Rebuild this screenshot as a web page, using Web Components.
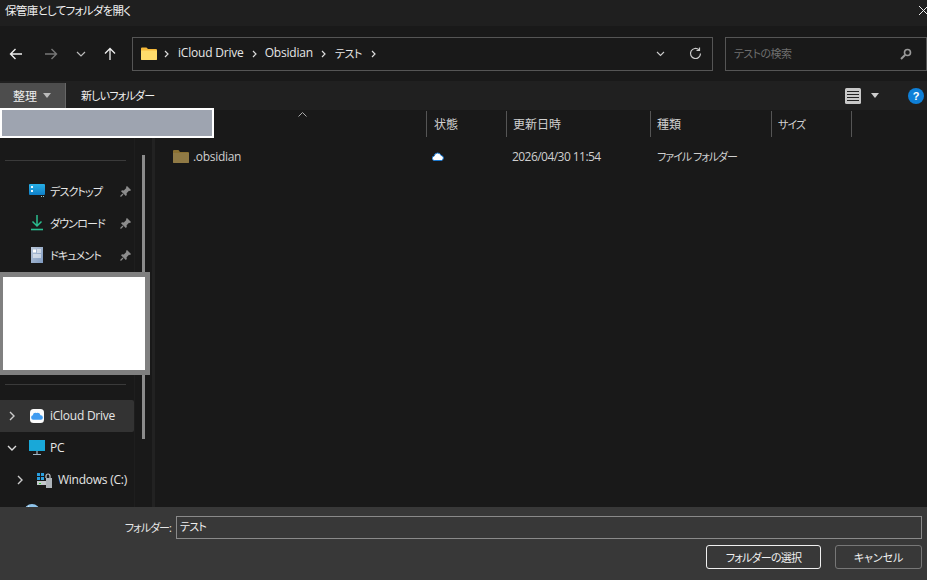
<!DOCTYPE html>
<html>
<head>
<meta charset="utf-8">
<style>
html, body { margin: 0; padding: 0; background: #191919; }
body { font: 12px "Open Sans", "Noto Sans CJK JP", sans-serif; font-feature-settings: "palt"; color: #e6e6e6; }
</style>
</head>
<body>
<folder-dialog>
    <title-bar>保管庫としてフォルダを開く</title-bar>
    <nav-bar></nav-bar>
    <tool-bar></tool-bar>
    <main-pane>
        <side-bar>
            <side-item icon="desktop" pin>デスクトップ</side-item>
            <side-item icon="download" pin>ダウンロード</side-item>
            <side-item icon="document" pin>ドキュメント</side-item>
            <side-rule></side-rule>
            <side-item icon="icloud" arrow="right" active>iCloud Drive</side-item>
            <side-item icon="pc" arrow="down">PC</side-item>
            <side-item icon="drive" arrow="right" level="1">Windows (C:)</side-item>
            <side-item icon="globe"></side-item>
        </side-bar>
        <file-list></file-list>
    </main-pane>
    <foot-bar></foot-bar>
</folder-dialog>

<script>
const icons = {
    desktop: `<svg width="17" height="14" viewBox="0 0 17 14"><defs><linearGradient id="d" x1="0" y1="0" x2="0" y2="1"><stop offset="0" stop-color="#27b0e6"/><stop offset="1" stop-color="#0f7ec8"/></linearGradient></defs><rect x="0" y="0" width="16" height="11" rx="1" fill="url(#d)"/><rect x="2" y="2" width="2" height="2" fill="#e8f6fc"/><rect x="2" y="6" width="2" height="2" fill="#e8f6fc"/><rect x="12" y="12" width="1" height="1" fill="#9cc"/><rect x="14" y="12" width="1" height="1" fill="#9cc"/></svg>`,
    download: `<svg width="14" height="16" viewBox="0 0 14 16"><path d="M7 0v11M2.5 6.5 7 11l4.5-4.5" fill="none" stroke="#2bbd8f" stroke-width="1.5"/><path d="M1 14.5h12" stroke="#2bbd8f" stroke-width="1.6"/></svg>`,
    document: `<svg width="12" height="16" viewBox="0 0 12 16"><defs><linearGradient id="p" x1="0" y1="0" x2="1" y2="1"><stop offset="0" stop-color="#b9c6d8"/><stop offset="1" stop-color="#7f9ac0"/></linearGradient></defs><rect width="12" height="16" fill="url(#p)"/><rect x="2" y="2.5" width="3" height="3" fill="#fff"/><path d="M6 3h4M6 5h4M2 8h8M2 10h8" stroke="#fff"/></svg>`,
    icloud: `<svg width="14" height="14" viewBox="0 0 14 14"><rect width="14" height="14" rx="3.5" fill="#fbfbfb"/><path d="M3.2 10.8a2.3 2.3 0 0 1-.4-4.5A2.9 2.9 0 0 1 6.4 4a3.3 3.3 0 0 1 4.1 2.2 2.3 2.3 0 0 1 .2 4.6z" fill="#3f9bf0"/></svg>`,
    pc: `<svg width="16" height="16" viewBox="0 0 16 16"><rect x="0" y="0" width="16" height="11" fill="#19a8d8"/><path d="M8 11v3M4 14.5h8" stroke="#9fb4c4" stroke-width="1.2"/></svg>`,
    drive: `<svg width="16" height="15" viewBox="0 0 16 15"><path d="M0 0h3v3H0zM4 0h3v3H4zM0 4h3v3H0zM4 4h3v3H4z" fill="#2a9fe0"/><rect x="0" y="8" width="15" height="4" fill="#c4c8cc"/><path d="M9 5V3a2 2 0 0 1 4 0V5" fill="none" stroke="#c4c8cc" stroke-width="1.2"/><rect x="9" y="5" width="6" height="10" fill="#aeb4ba"/><rect x="2" y="10" width="2" height="1" fill="#3c3"/></svg>`,
    globe: `<svg width="16" height="16" viewBox="0 0 16 16" style="transform:translateX(-5px)"><circle cx="8" cy="8" r="8" fill="#8fc4ea"/><path d="M4 2c2 1 3 3 2 5" fill="none" stroke="#e0eef8"/></svg>`
}

const sep = `<svg class="sep" width="5" height="8" viewBox="0 0 5 8"><path d="M1 1l3 3-3 3" fill="none" stroke="#ddd" stroke-width="1.2"/></svg>`

class FolderDialog extends HTMLElement {
    constructor() {
        super()
        this.attachShadow({ mode: 'open' }).innerHTML = `
            <style>
                :host { display: flex; flex-direction: column; width: 927px; height: 580px; overflow: hidden; position: relative; }
                .redact-top { position: absolute; left: 0; top: 108px; width: 210px; height: 26px; background: #9ea4b0; border: 2px solid #fff; }
                .redact-mid { position: absolute; left: 0; top: 272px; width: 142px; height: 93px; background: #fff; border: 5px solid #808080; border-left-width: 3px; }
            </style>
            <slot></slot>
            <div class="redact-top"></div>
            <div class="redact-mid"></div>`
    }
}

class TitleBar extends HTMLElement {
    constructor() {
        super()
        this.attachShadow({ mode: 'open' }).innerHTML = `
            <style>
                :host { display: flex; align-items: center; justify-content: space-between; box-sizing: border-box; height: 26px; padding: 0 0 6px 5px; background: #1f1f1f; color: #f0f0f0; flex: none; font-size: 11.5px; letter-spacing: -0.68px; }
                svg { margin-right: -2px; display: block; }
            </style>
            <span><slot></slot></span>
            <svg width="11" height="11" viewBox="0 0 11 11"><path d="M1 1l9 9M10 1l-9 9" stroke="#eee" stroke-width="1"/></svg>`
    }
}

class NavBar extends HTMLElement {
    constructor() {
        super()
        this.attachShadow({ mode: 'open' }).innerHTML = `
            <style>
                :host { display: flex; align-items: center; height: 55px; background: #191919; flex: none; }
                .btn { display: flex; justify-content: center; width: 14px; flex: none; }
                .addr { display: flex; align-items: center; box-sizing: border-box; width: 581px; height: 34px; margin-left: 15px; border: 1px solid #555; padding: 0 10px 2px 8px; }
                .crumb { color: #e6e6e6; margin-right: 8px; letter-spacing: -0.2px; }
                .kana { font-size: 11px; letter-spacing: -0.4px; margin: 0 9px 0 1px; }
                .sep { margin: 2px 8px 0 0; display: block; }
                .grow { flex: 1; }
                .search { display: flex; align-items: center; justify-content: space-between; box-sizing: border-box; width: 202px; height: 34px; margin-left: 12px; border: 1px solid #555; padding: 0 14px 2px 8px; color: #6e6e6e; font-size: 11px; letter-spacing: -0.6px; }
            </style>
            <div class="btn" style="margin-left:9px"><svg width="14" height="14" viewBox="0 0 14 14"><path d="M13 7H1.5M6.5 2 1.5 7l5 5" fill="none" stroke="#eee" stroke-width="1.4"/></svg></div>
            <div class="btn" style="margin-left:21px"><svg width="14" height="14" viewBox="0 0 14 14"><path d="M1 7h11.5M7.5 2l5 5-5 5" fill="none" stroke="#777" stroke-width="1.4"/></svg></div>
            <div class="btn" style="margin-left:16px"><svg width="10" height="6" viewBox="0 0 10 6"><path d="M1 1l4 4 4-4" fill="none" stroke="#bbb" stroke-width="1.2"/></svg></div>
            <div class="btn" style="margin-left:15px"><svg width="14" height="14" viewBox="0 0 14 14"><path d="M7 13V1.5M2 6.5l5-5 5 5" fill="none" stroke="#eee" stroke-width="1.3"/></svg></div>
            <div class="addr">
                <svg width="16" height="13" viewBox="0 0 16 13" style="margin:2px 7px 0 0"><path d="M0 1.5A1 1 0 0 1 1 .5h4.5L7 2h8a1 1 0 0 1 1 1v9a1 1 0 0 1-1 1H1a1 1 0 0 1-1-1z" fill="#f5b93a"/><path d="M0 3.5h16V12a1 1 0 0 1-1 1H1a1 1 0 0 1-1-1z" fill="#ffdc6b"/></svg>
                ${sep}
                <span class="crumb" style="margin-left:1px">iCloud Drive</span>
                ${sep}
                <span class="crumb">Obsidian</span>
                ${sep}
                <span class="crumb kana">テスト</span>
                ${sep}
                <span class="grow"></span>
                <svg width="9" height="6" viewBox="0 0 9 6" style="margin:2px 24px 0 0"><path d="M1 1l3.5 3.5L8 1" fill="none" stroke="#ccc" stroke-width="1.1"/></svg>
                <svg width="13" height="13" viewBox="0 0 13 13" style="margin-top:2px"><path d="M11.5 6.5a5 5 0 1 1-1.6-3.7" fill="none" stroke="#ccc" stroke-width="1.2"/><path d="M10.5.5v3h-3" fill="none" stroke="#ccc" stroke-width="1.2"/></svg>
            </div>
            <div class="search">
                <span>テストの検索</span>
                <svg width="12" height="12" viewBox="0 0 12 12" style="margin-top:2px"><circle cx="7.5" cy="4.5" r="3" fill="none" stroke="#9a9a9a" stroke-width="1.6"/><path d="M5 7l-4 4" stroke="#9a9a9a" stroke-width="2"/></svg>
            </div>`
    }
}

class ToolBar extends HTMLElement {
    constructor() {
        super()
        this.attachShadow({ mode: 'open' }).innerHTML = `
            <style>
                :host { display: flex; align-items: center; height: 29px; background: #202020; flex: none; }
                .org { display: flex; align-items: center; box-sizing: border-box; width: 66px; height: 27px; align-self: flex-start; margin-top: 2px; background: #4d4d4d; border-right: 1px solid #666; padding: 0 0 2px 13px; gap: 6px; color: #eee; }
                .tri { width: 0; height: 0; border: 4px solid transparent; border-top: 5px solid #bbb; border-bottom: 0; }
                .new { margin: 0 0 2px 15px; color: #f0f0f0; font-size: 11px; letter-spacing: -0.8px; }
                .grow { flex: 1; }
                .view { margin-right: 10px; display: block; }
                .help { margin: 0 3px 0 29px; display: block; }
            </style>
            <div class="org"><span>整理</span><div class="tri"></div></div>
            <span class="new">新しいフォルダー</span>
            <span class="grow"></span>
            <svg class="view" width="16" height="16" viewBox="0 0 16 16"><rect width="16" height="16" rx="1.5" fill="#c8c8c8"/><path d="M2 3.5h12M2 6.5h12M2 9.5h12M2 12.5h12" stroke="#222" stroke-width="1"/></svg>
            <div class="tri" style="border-top-color:#ccc"></div>
            <svg class="help" width="16" height="16" viewBox="0 0 16 16"><circle cx="8" cy="8" r="8" fill="#0f80d8"/><text x="8" y="12" text-anchor="middle" font-size="11" font-weight="700" font-family="Liberation Sans" fill="#fff">?</text></svg>`
    }
}

class MainPane extends HTMLElement {
    constructor() {
        super()
        this.attachShadow({ mode: 'open' }).innerHTML = `
            <style>
                :host { display: flex; flex: 1; min-height: 0; background: #191919; }
            </style>
            <slot></slot>`
    }
}

class SideBar extends HTMLElement {
    constructor() {
        super()
        this.attachShadow({ mode: 'open' }).innerHTML = `
            <style>
                :host { display: block; position: relative; flex: none; box-sizing: border-box; width: 155px; height: 397px; padding-top: 50px; overflow: hidden; border-right: 3px solid #222; }
                .rule { width: 121px; height: 1px; background: #3a3a3a; margin: 0 0 14px 5px; }
                .scroll { position: absolute; left: 142px; top: 45px; width: 3px; height: 284px; background: #8b8b8b; }
                .edge { position: absolute; left: 134px; top: 0; bottom: 0; width: 1px; background: #1e1e1e; }
            </style>
            <div class="rule"></div>
            <slot></slot>
            <div class="edge"></div>
            <div class="scroll"></div>`
    }
}

class SideRule extends HTMLElement {
    constructor() {
        super()
        this.attachShadow({ mode: 'open' }).innerHTML = `
            <style>
                :host { display: block; width: 121px; height: 1px; background: #3a3a3a; margin: 113px 0 15px 5px; }
            </style>`
    }
}

class SideItem extends HTMLElement {
    constructor() {
        super()
        const level = Number(this.getAttribute('level') || 0)
        const arrow = this.getAttribute('arrow')
        const isPinned = this.hasAttribute('pin')
        const arrowSvg = arrow === 'right'
            ? `<svg width="6" height="10" viewBox="0 0 6 10"><path d="M1 1l4 4-4 4" fill="none" stroke="#ccc" stroke-width="1.4"/></svg>`
            : arrow === 'down'
                ? `<svg width="10" height="6" viewBox="0 0 10 6"><path d="M1 1l4 4 4-4" fill="none" stroke="#ddd" stroke-width="1.4"/></svg>`
                : ''
        const pin = isPinned
            ? `<svg class="pin" width="11" height="11" viewBox="0 0 11 11"><path d="M7 0l4 4-1 1-1-.3L6.6 7.2 6.8 9l-1 1L1 5.2l1-1 1.8.2L6.3 2 6 1z" fill="#8c8c8c"/><path d="M3 8 .5 10.5" stroke="#8c8c8c" stroke-width="1.2"/></svg>`
            : ''
        this.attachShadow({ mode: 'open' }).innerHTML = `
            <style>
                :host { display: flex; align-items: center; box-sizing: border-box; width: 134px; height: 32px; position: relative; color: #e6e6e6; white-space: nowrap; flex: none; }
                :host([active]) { background: #333; border-radius: 0 2px 2px 0; }
                .arrow { width: 24px; margin-left: ${level * 8}px; display: flex; justify-content: center; flex: none; }
                .icon { width: 18px; margin-left: 4px; margin-right: 4px; display: flex; justify-content: center; flex: none; }
                .label { flex: 1; padding-bottom: ${isPinned ? '0' : '2px'}; font-size: ${isPinned ? '11px' : '12px'}; letter-spacing: ${isPinned ? '-0.87px' : '-0.25px'}; }
                .pin { position: absolute; left: 120px; top: 11px; }
            </style>
            <div class="arrow">${arrowSvg}</div>
            <div class="icon">${icons[this.getAttribute('icon')]}</div>
            <span class="label"><slot></slot></span>
            ${pin}`
    }
}

class FileList extends HTMLElement {
    constructor() {
        super()
        this.attachShadow({ mode: 'open' }).innerHTML = `
            <style>
                :host { display: block; flex: 1; position: relative; }
                .head { display: grid; grid-template-columns: 271px 80px 144px 121px 80px 1px; height: 27px; padding-top: 1px; position: relative; }
                .col { display: flex; align-items: center; padding-left: 6px; border-left: 1px solid #555; color: #d0d0d0; height: 26px; }
                .col:first-child { border-left: 0; }
                .col.first { padding-left: 7px; }
                .col.fit { font-size: 11px; letter-spacing: -1px; }
                .sort { position: absolute; left: 143px; top: 2px; }
                .row { display: grid; grid-template-columns: 271px 80px 144px 200px; height: 20px; margin-top: 8px; align-items: center; color: #cfcfcf; }
                .name { display: flex; align-items: center; gap: 4px; padding-left: 18px; }
                .name span { letter-spacing: -0.3px; }
                .cell { padding-left: 7px; }
                .date { padding-left: 6px; letter-spacing: -0.55px; }
                .type { font-size: 11px; letter-spacing: -1px; }
                .status { padding-left: 6px; }
            </style>
            <div class="head">
                <div class="col"></div>
                <div class="col first">状態</div>
                <div class="col">更新日時</div>
                <div class="col">種類</div>
                <div class="col fit">サイズ</div>
                <div class="col" style="padding:0"></div>
                <svg class="sort" width="9" height="5" viewBox="0 0 9 5"><path d="M.5 4.5l4-4 4 4" fill="none" stroke="#aaa"/></svg>
            </div>
            <div class="row">
                <div class="name">
                    <svg width="16" height="13" viewBox="0 0 16 13"><path d="M0 1a1 1 0 0 1 1-1h4.5L7 2h8a1 1 0 0 1 1 1v9a1 1 0 0 1-1 1H1a1 1 0 0 1-1-1z" fill="#8a7032"/><path d="M0 3h16v9a1 1 0 0 1-1 1H1a1 1 0 0 1-1-1z" fill="#907a45"/></svg>
                    <span>.obsidian</span>
                </div>
                <div class="cell status"><svg width="12" height="9" viewBox="0 0 12 9" style="display:block"><path d="M2.5 8.5a2.2 2.2 0 0 1-.3-4.4A3.5 3.5 0 0 1 9 3.4a2.6 2.6 0 0 1 .5 5.1z" fill="#fff" stroke="#1a78d0"/></svg></div>
                <div class="cell date">2026/04/30 11:54</div>
                <div class="cell type">ファイル フォルダー</div>
            </div>`
    }
}

class FootBar extends HTMLElement {
    constructor() {
        super()
        this.attachShadow({ mode: 'open' }).innerHTML = `
            <style>
                :host { display: flex; flex-direction: column; height: 73px; background: #383838; flex: none; box-sizing: border-box; padding: 9px 5px 0 0; }
                .line { display: flex; align-items: center; justify-content: flex-end; gap: 5px; color: #e6e6e6; }
                .line span { font-size: 11px; letter-spacing: -0.95px; padding-bottom: 2px; }
                .input { box-sizing: border-box; width: 746px; height: 23px; border: 1px solid #8a8a8a; padding-left: 3px; line-height: 20px; color: #f0f0f0; font-size: 11px; letter-spacing: -0.8px; }
                .btns { display: flex; justify-content: flex-end; gap: 14px; margin-top: 6px; }
                .b { display: flex; align-items: center; justify-content: center; box-sizing: border-box; height: 24px; border-radius: 3px; color: #f0f0f0; background: #383838; font-size: 11px; letter-spacing: -0.75px; }
                .ok { width: 115px; border: 1px solid #f0f0f0; }
                .no { width: 87px; border: 1px solid #777; letter-spacing: -0.1px; }
            </style>
            <div class="line"><span>フォルダー:</span><div class="input">テスト</div></div>
            <div class="btns"><div class="b ok">フォルダーの選択</div><div class="b no">キャンセル</div></div>`
    }
}

customElements.define('folder-dialog', FolderDialog)
customElements.define('title-bar', TitleBar)
customElements.define('nav-bar', NavBar)
customElements.define('tool-bar', ToolBar)
customElements.define('main-pane', MainPane)
customElements.define('side-bar', SideBar)
customElements.define('side-rule', SideRule)
customElements.define('side-item', SideItem)
customElements.define('file-list', FileList)
customElements.define('foot-bar', FootBar)
</script>
</body>
</html>
